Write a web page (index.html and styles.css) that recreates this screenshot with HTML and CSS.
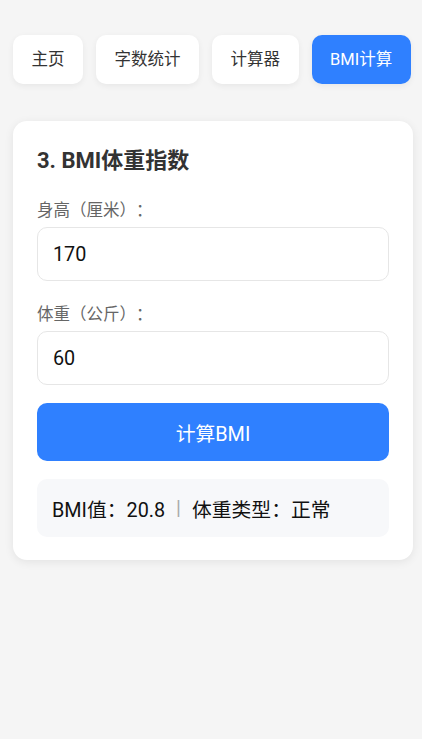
FILE: index.html
```html
<!DOCTYPE html>
<html lang="zh">
<head>
<meta charset="utf-8">
<title>BMI计算</title>
<link rel="stylesheet" href="styles.css">
</head>
<body>
<nav class="nav">
  <a class="nav-btn">主页</a>
  <a class="nav-btn">字数统计</a>
  <a class="nav-btn">计算器</a>
  <a class="nav-btn active">BMI计算</a>
</nav>
<section class="card">
  <h2 class="title">3. BMI体重指数</h2>
  <label class="label">身高（厘米）：</label>
  <input class="input" type="text" value="170">
  <label class="label second">体重（公斤）：</label>
  <input class="input" type="text" value="60">
  <button class="calc">计算BMI</button>
  <div class="result">BMI值：20.8<span class="sep">|</span>体重类型：正常</div>
</section>
</body>
</html>
```
FILE: styles.css
```css
* { box-sizing: border-box; }
html, body { margin: 0; padding: 0; }
body {
  background: #f5f5f5;
  font-family: Roboto, "Noto Sans CJK SC", sans-serif;
  color: #333;
  padding: 35px 9px 20px 13px;
  text-spacing-trim: space-all;
}
.nav {
  display: flex;
  gap: 13px;
}
.nav-btn {
  display: block;
  flex: none;
  white-space: nowrap;
  background: #fff;
  color: #333;
  font-size: 16.5px;
  line-height: 25px;
  padding: 12px 18.5px;
  border-radius: 10px;
  box-shadow: 0 2px 6px rgba(0,0,0,0.06);
}
.nav-btn.active {
  background: #2f80ff;
  color: #fff;
}
.card {
  margin-top: 37px;
  background: #fff;
  border-radius: 14px;
  padding: 24px 24px 23px;
  box-shadow: 0 2px 10px rgba(0,0,0,0.08);
  display: flex;
  flex-direction: column;
}
.title {
  margin: 0 0 22px;
  font-size: 22px;
  line-height: 32px;
  font-weight: 700;
  color: #333;
}
.label {
  font-size: 16.5px;
  line-height: 23px;
  color: #666;
  margin-bottom: 5px;
}
.label.second { margin-top: 22px; }
.input {
  height: 54px;
  border: 1px solid #e6e6e6;
  border-radius: 10px;
  padding: 0 15px;
  font-family: inherit;
  font-size: 19.8px;
  color: #111;
  background: #fff;
  outline: none;
}
.calc {
  margin-top: 18px;
  height: 58px;
  border: none;
  border-radius: 10px;
  background: #2f80ff;
  color: #fff;
  font-family: inherit;
  font-size: 19.8px;
}
.result {
  margin-top: 18px;
  background: #f7f8fa;
  border-radius: 10px;
  height: 58px;
  padding: 0 15px;
  display: flex;
  align-items: center;
  font-size: 19.8px;
  color: #111;
}
.sep {
  color: #aaa;
  margin: 0 11px;
  font-size: 20px;
}
```
